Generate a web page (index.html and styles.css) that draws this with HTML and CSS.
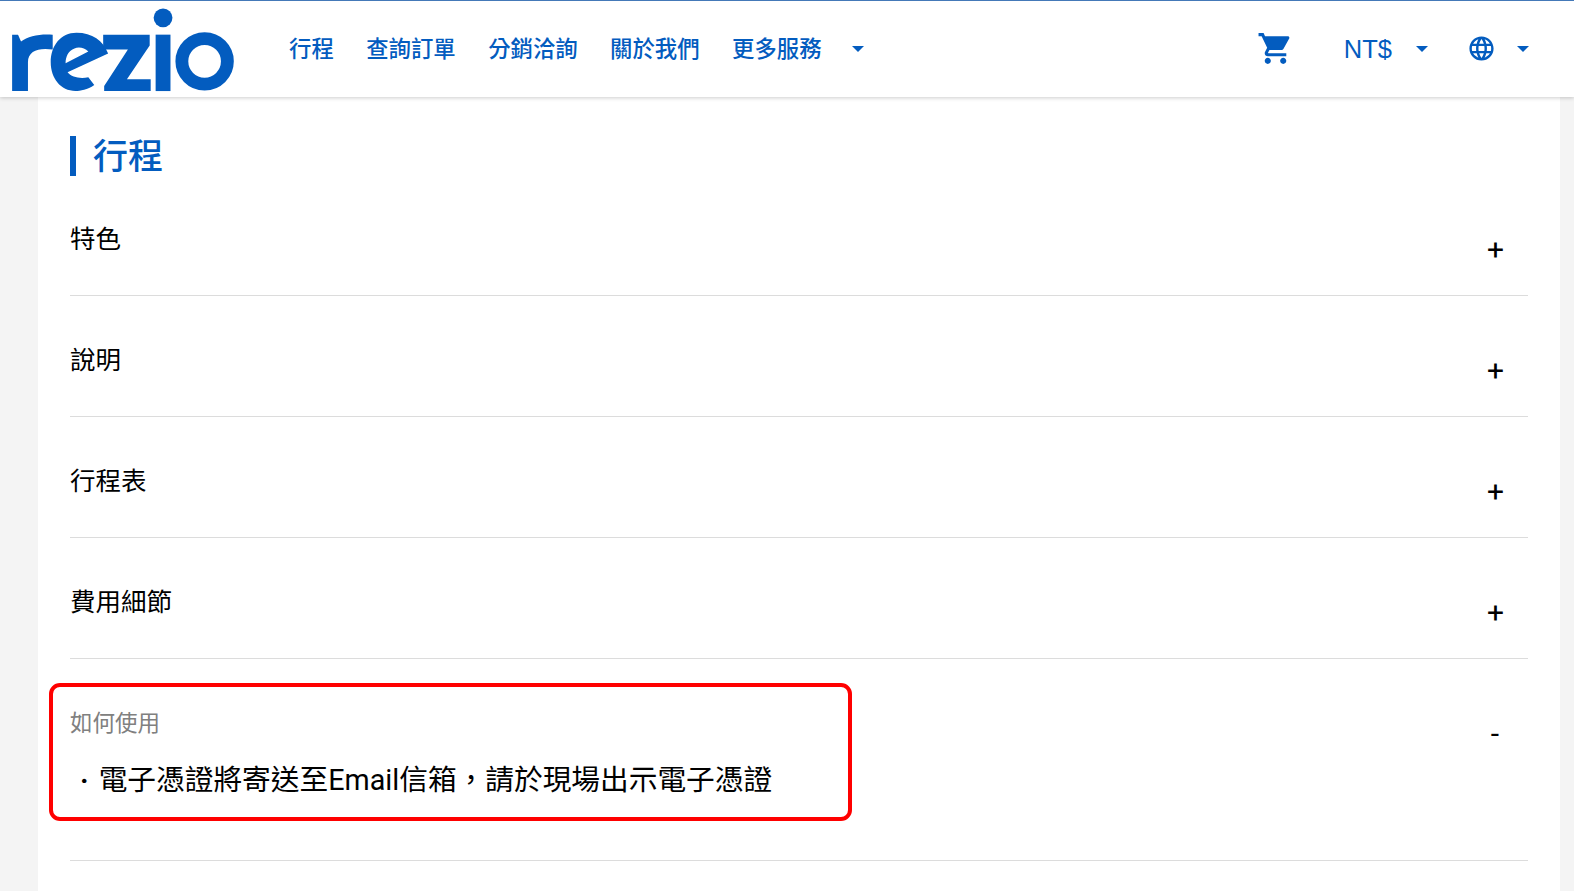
FILE: index.html
```html
<!DOCTYPE html>
<html lang="zh-Hant">
<head>
    <meta charset="UTF-8">
    <title>行程</title>
    <link rel="stylesheet" href="styles.css">
</head>
<body>
    <header class="topbar">
        <svg class="logo" viewBox="0 0 240 97" width="240" height="96" aria-label="rezio">
            <path d="M11 34L17 34L20 41C27 35 40 33 52 34L52 49C38 47 27 50 27 62L27 91L11 91Z"/>
            <path fill-rule="evenodd" d="M108 53L67 72C71 77 80 79 88 77L94 85C87 90 80 91 75 91C60 91 50 78 50 62C50 45 60 32 76 32C92 32 103 40 108 53ZM65 63L88 51C84 47 78 46 74 48C68 50 65 56 65 63Z"/>
            <path d="M103 34L150 34L150 45L127 79L151 79L151 91L104 91L104 86L128 49L103 49Z"/>
            <rect x="156" y="34" width="15" height="57"/>
            <circle cx="163.500" cy="17" r="9.500"/>
            <circle cx="205.500" cy="61" r="23" fill="none" stroke="#035cbf" stroke-width="13"/>
        </svg>
        <nav class="nav">
            <a class="nav-link" href="#">行程</a>
            <a class="nav-link" href="#">查詢訂單</a>
            <a class="nav-link" href="#">分銷洽詢</a>
            <a class="nav-link" href="#">關於我們</a>
            <a class="nav-link" href="#">更多服務</a>
            <span class="caret caret-nav"></span>
        </nav>
        <div class="tools">
            <svg class="cart" viewBox="0 0 24 24" width="37" height="37"><path d="M7 18c-1.1 0-1.99.9-1.99 2S5.9 22 7 22s2-.9 2-2-.9-2-2-2zM1 2v2h2l3.6 7.59-1.35 2.45c-.16.28-.25.61-.25.96 0 1.1.9 2 2 2h12v-2H7.42c-.14 0-.25-.11-.25-.25l.03-.12.9-1.63h7.45c.75 0 1.41-.41 1.75-1.03l3.58-6.49c.08-.14.12-.31.12-.48 0-.55-.45-1-1-1H5.21l-.94-2H1zm16 16c-1.1 0-1.99.9-1.99 2s.89 2 1.99 2 2-.9 2-2-.9-2-2-2z"/></svg>
            <span class="currency">NT$</span>
            <span class="caret caret-currency"></span>
            <svg class="globe" viewBox="0 0 24 24" width="29" height="29"><path d="M11.99 2C6.47 2 2 6.48 2 12s4.47 10 9.99 10C17.52 22 22 17.52 22 12S17.52 2 11.99 2zm6.93 6h-2.95c-.32-1.25-.78-2.45-1.38-3.56 1.84.63 3.37 1.91 4.33 3.56zM12 4.04c.83 1.2 1.48 2.53 1.91 3.96h-3.82c.43-1.43 1.08-2.76 1.91-3.96zM4.26 14C4.1 13.36 4 12.69 4 12s.1-1.36.26-2h3.38c-.08.66-.14 1.32-.14 2 0 .68.06 1.34.14 2H4.26zm.82 2h2.95c.32 1.25.78 2.45 1.38 3.56-1.84-.63-3.37-1.9-4.33-3.56zm2.95-8H5.08c.96-1.66 2.49-2.93 4.33-3.56C8.81 5.55 8.35 6.75 8.03 8zM12 19.96c-.83-1.2-1.48-2.53-1.91-3.96h3.82c-.43 1.43-1.08 2.76-1.91 3.96zM14.34 14H9.66c-.09-.66-.16-1.32-.16-2 0-.68.07-1.35.16-2h4.68c.09.65.16 1.32.16 2 0 .68-.07 1.34-.16 2zm.25 5.56c.6-1.11 1.06-2.31 1.38-3.56h2.95c-.96 1.65-2.49 2.93-4.33 3.56zM16.36 14c.08-.66.14-1.32.14-2 0-.68-.06-1.34-.14-2h3.38c.16.64.26 1.31.26 2s-.1 1.36-.26 2h-3.38z"/></svg>
            <span class="caret caret-lang"></span>
        </div>
    </header>

    <main class="card">
        <h2 class="section-title">行程</h2>

        <div class="row">
            <span class="row-title">特色</span>
            <span class="row-sign">+</span>
        </div>
        <div class="row">
            <span class="row-title">說明</span>
            <span class="row-sign">+</span>
        </div>
        <div class="row">
            <span class="row-title">行程表</span>
            <span class="row-sign">+</span>
        </div>
        <div class="row">
            <span class="row-title">費用細節</span>
            <span class="row-sign">+</span>
        </div>
        <div class="row row-open">
            <div class="row-body">
                <span class="row-title row-title-muted">如何使用</span>
                <p class="row-text"><span class="row-dot">‧</span>電子憑證將寄送至Email信箱，請於現場出示電子憑證</p>
            </div>
            <span class="row-sign">-</span>
            <!-- red annotation box -->
            <div class="highlight"></div>
        </div>
    </main>
</body>
</html>
```

FILE: styles.css
```css
* {
    box-sizing: border-box;
}

html, body {
    height: 100%;
}

body {
    margin: 0;
    background-color: #f4f4f4;
    font-family: Roboto, "Noto Sans CJK TC", sans-serif;
    color: #000;
    overflow: hidden;
}

.topbar {
    position: relative;
    z-index: 2;
    display: flex;
    align-items: center;
    height: 97px;
    border-top: 1px solid #4479b8;
    background-color: #fff;
    box-shadow: 0 1px 4px rgba(0, 0, 0, 0.2);
}

.logo {
    flex: none;
    fill: #035cbf;
}

.nav {
    display: flex;
    align-items: center;
    gap: 32.400px;
    margin-left: 49px;
}

.nav-link {
    font-size: 22.400px;
    font-weight: 500;
    line-height: 32px;
    color: #035cbf;
    text-decoration: none;
}

.caret {
    flex: none;
    width: 0;
    height: 0;
    border-left: 6px solid transparent;
    border-right: 6px solid transparent;
    border-top: 6px solid #035cbf;
}

.caret-nav {
    margin-left: -2px;
}

.tools {
    display: flex;
    align-items: center;
    margin-left: auto;
    padding-right: 45px;
}

.cart {
    fill: #035cbf;
    margin-top: -2px;
}

.currency {
    margin-left: 50px;
    font-family: "Liberation Sans", sans-serif;
    font-size: 25.500px;
    color: #035cbf;
}

.caret-currency {
    margin-left: 24px;
}

.globe {
    margin-left: 39px;
    margin-top: -2px;
    fill: #035cbf;
}

.caret-lang {
    margin-left: 21px;
}

.card {
    width: 1522px;
    height: 794px;
    margin-left: 38px;
    padding: 39px 32px 0;
    background-color: #fff;
}

.section-title {
    height: 40px;
    margin: 0;
    padding-left: 17px;
    border-left: 6px solid #035cbf;
    font-size: 35px;
    font-weight: 500;
    line-height: 44px;
    color: #035cbf;
}

.row {
    position: relative;
    display: flex;
    justify-content: space-between;
    height: 121px;
    border-bottom: 1px solid #dcdcdc;
}

.section-title + .row {
    height: 120px;
}

.row-title {
    display: block;
    padding-top: 45px;
    font-size: 25.500px;
    line-height: 38px;
}

.section-title + .row .row-title {
    padding-top: 44px;
}

.row-sign {
    width: 16px;
    margin-right: 25px;
    padding-top: 56px;
    font-size: 30px;
    line-height: 38px;
    text-align: center;
}

.section-title + .row .row-sign {
    padding-top: 55px;
}

.row-open {
    height: 202px;
}

.row-title-muted {
    padding-top: 48px;
    font-size: 22.500px;
    line-height: 32px;
    color: #808080;
}

.row-text {
    margin: 20px 0 0;
    font-size: 28.700px;
    line-height: 42px;
}

.row-dot {
    display: inline-block;
    width: 1em;
    font-weight: 700;
    text-align: center;
}

.highlight {
    position: absolute;
    left: -21px;
    top: 24px;
    width: 803px;
    height: 138px;
    border: 4px solid #f00;
    border-radius: 11px;
}
```
